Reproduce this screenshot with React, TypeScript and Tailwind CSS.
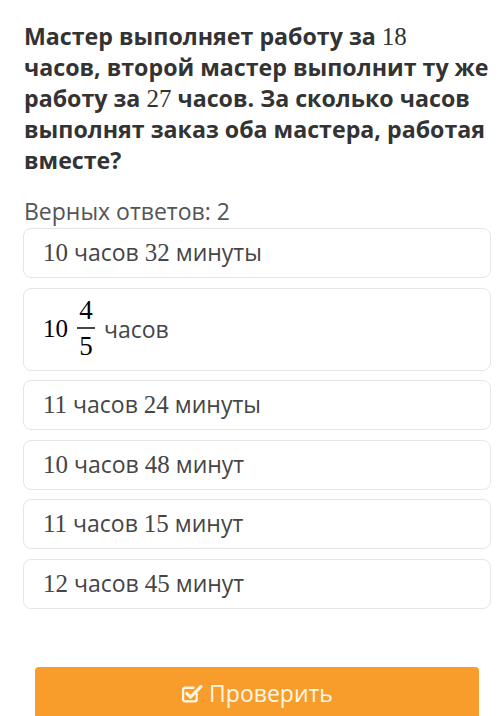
const options = [
  { id: 1, h: "10", rest: "часов", n: "32", tail: "минуты" },
  { id: 3, h: "11", rest: "часов", n: "24", tail: "минуты" },
  { id: 4, h: "10", rest: "часов", n: "48", tail: "минут" },
  { id: 5, h: "11", rest: "часов", n: "15", tail: "минут" },
  { id: 6, h: "12", rest: "часов", n: "45", tail: "минут" },
];

const sans = "font-['Open_Sans','Noto_Sans',sans-serif]";
const num = "font-['Liberation_Serif','DejaVu_Serif',serif] text-[25px]";

const Num = ({ children }: { children: string }) => (
  <span className={num}>{children}</span>
);

const Option = ({ h, rest, n, tail }: { h: string; rest: string; n: string; tail: string }) => (
  <div className="h-[50px] flex items-center px-[19px] border border-[#e6e6e6] rounded-lg bg-white">
    <span className="text-[23px] text-[#454545]">
      <Num>{h}</Num> {rest} <Num>{n}</Num> {tail}
    </span>
  </div>
);

const CheckIcon = () => (
  <svg width="22" height="21" viewBox="0 0 21 20" fill="none" className="mr-[6px]">
    <path
      d="M15 10.5v5a2 2 0 0 1-2 2H4a2 2 0 0 1-2-2V6.5a2 2 0 0 1 2-2h8"
      stroke="#fff6e4"
      strokeWidth="2.2"
      strokeLinecap="round"
    />
    <path
      d="M5.5 10l3.5 3.5L19 3.5"
      stroke="#fff6e4"
      strokeWidth="3"
      strokeLinecap="round"
      strokeLinejoin="round"
    />
  </svg>
);

const App = () => {
  return (
    <div className={`w-[500px] h-[716px] overflow-hidden bg-white ${sans}`}>
      <div className="pl-[24px] pr-[8px] pt-[21px]">
        <h1 className="text-[23.2px] leading-[31px] font-bold text-[#333] whitespace-nowrap">
          Мастер выполняет работу за <span className={`${num} font-normal`}>18</span>
          <br />
          часов, второй мастер выполнит ту же
          <br />
          работу за <span className={`${num} font-normal`}>27</span> часов. За сколько часов
          <br />
          выполнят заказ оба мастера, работая
          <br />
          вместе?
        </h1>
        <p className="mt-[22px] text-[23px] leading-[26px] text-[#555]">Верных ответов: 2</p>
      </div>

      <div className="ml-[23px] w-[468px] mt-[4px] flex flex-col gap-[9.5px]">
        <Option {...options[0]} />
        <div className="h-[83px] flex items-center px-[19px] border border-[#e6e6e6] rounded-lg bg-white">
          <Num>10</Num>
          <span className="inline-flex flex-col items-center mx-[9px] -mt-[2px]">
            <span className={`${num} text-[27px] leading-[34px]`}>4</span>
            <span className="w-[18px] h-[1.5px] bg-[#454545]" />
            <span className={`${num} text-[27px] leading-[34px]`}>5</span>
          </span>
          <span className="text-[23px] text-[#454545]">часов</span>
        </div>
        {options.slice(1).map((o) => (
          <Option key={o.id} {...o} />
        ))}
      </div>

      <button className="mt-[58px] ml-[35px] w-[444px] h-[52px] rounded-t-[4px] bg-[#f89d2b] flex items-center justify-center pt-[2px]">
        <CheckIcon />
        <span className="text-[23px] text-[#fff6e4]">Проверить</span>
      </button>
    </div>
  );
};

export default App;
